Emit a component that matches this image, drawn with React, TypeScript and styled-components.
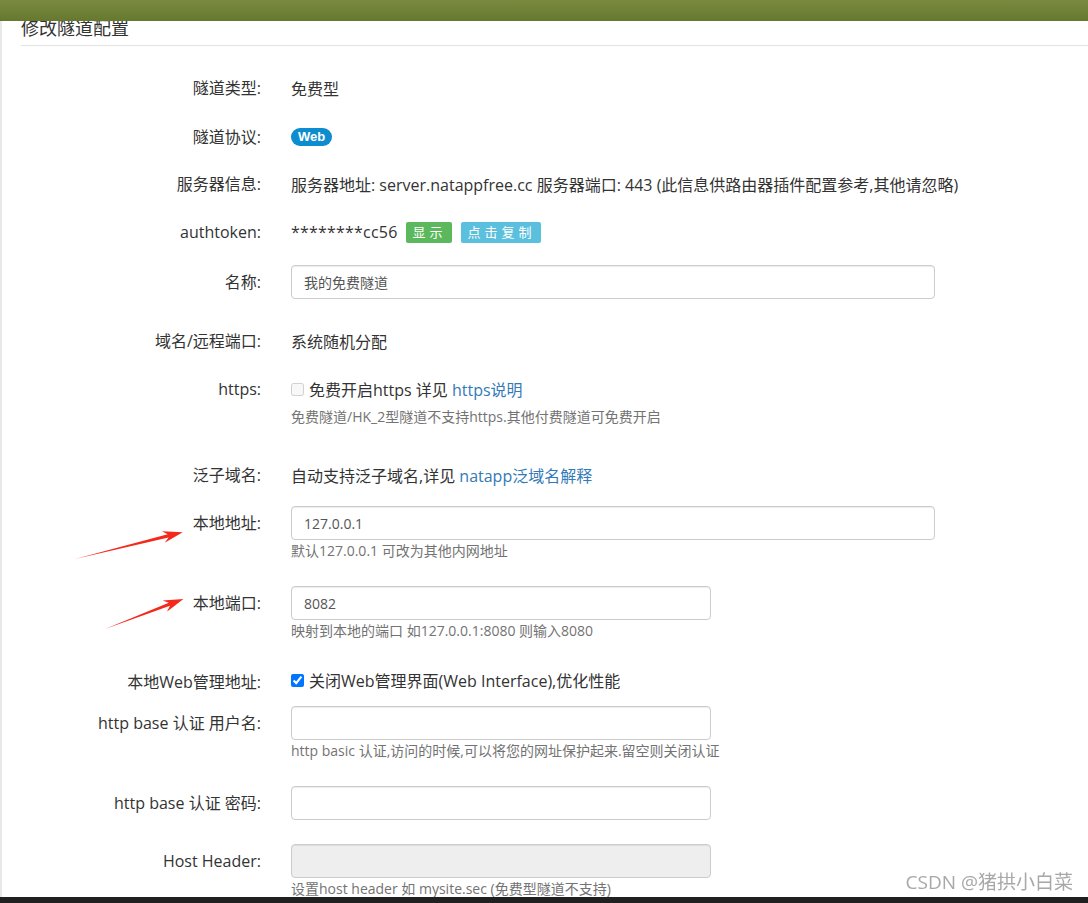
import React from "react";
import styled, { createGlobalStyle } from "styled-components";

const GlobalStyle = createGlobalStyle`
  html, body {
    margin: 0;
    padding: 0;
    background: #fff;
  }
  body {
    font-family: "Open Sans", "Noto Sans CJK SC", sans-serif;
    color: #333;
    font-size: 16px;
  }
`;

const FONT = `"Open Sans", "Noto Sans CJK SC", sans-serif`;

const App = () => {
  return (
    <>
      <GlobalStyle />
      <TopBar />
      <Panel>
        <Title>修改隧道配置</Title>
        <Form>
          <Arrows width="300" height="700" viewBox="0 0 300 700">
            <Arrow x={75} y={557 - 44} len={111} angle={-14} />
            <Arrow x={105} y={627 - 44} len={84} angle={-21} />
          </Arrows>

          <Row $mb={15}>
            <Label>隧道类型:</Label>
            <Static>免费型</Static>
          </Row>
          <Row $mb={13}>
            <Label>隧道协议:</Label>
            <Static>
              <Badge>Web</Badge>
            </Static>
          </Row>
          <Row $mb={14}>
            <Label>服务器信息:</Label>
            <Static>
              服务器地址: server.natappfree.cc 服务器端口: 443
              (此信息供路由器插件配置参考,其他请忽略)
            </Static>
          </Row>
          <Row $mb={16}>
            <Label>authtoken:</Label>
            <Static>
              <Token>********cc56</Token>
              <SmallBtn $color="#5cb85c">显示</SmallBtn>
              <SmallBtn $color="#5bc0de">点击复制</SmallBtn>
            </Static>
          </Row>
          <Row $mb={25}>
            <Label>名称:</Label>
            <div>
              <Input $w={644} defaultValue="我的免费隧道" />
            </div>
          </Row>
          <Row $mb={14}>
            <Label>域名/远程端口:</Label>
            <Static>系统随机分配</Static>
          </Row>
          <Row $mb={31}>
            <Label>https:</Label>
            <div>
              <Static>
                <Check type="checkbox" disabled />
                免费开启https 详见 <Link>https说明</Link>
              </Static>
              <Help>免费隧道/HK_2型隧道不支持https.其他付费隧道可免费开启</Help>
            </div>
          </Row>
          <Row $mb={14}>
            <Label>泛子域名:</Label>
            <Static>
              自动支持泛子域名,详见 <Link>natapp泛域名解释</Link>
            </Static>
          </Row>
          <Row $mb={25}>
            <Label>本地地址:</Label>
            <div>
              <Input $w={644} defaultValue="127.0.0.1" />
              <Help>默认127.0.0.1 可改为其他内网地址</Help>
            </div>
          </Row>
          <Row $mb={20}>
            <Label>本地端口:</Label>
            <div>
              <Input $w={420} defaultValue="8082" />
              <Help>映射到本地的端口 如127.0.0.1:8080 则输入8080</Help>
            </div>
          </Row>
          <Row $mb={7}>
            <Label $offset={4}>本地Web管理地址:</Label>
            <Static>
              <Check type="checkbox" defaultChecked />
              关闭Web管理界面(Web Interface),优化性能
            </Static>
          </Row>
          <Row $mb={25}>
            <Label>http base 认证 用户名:</Label>
            <div>
              <Input $w={420} />
              <Help>http basic 认证,访问的时候,可以将您的网址保护起来.留空则关闭认证</Help>
            </div>
          </Row>
          <Row $mb={24}>
            <Label>http base 认证 密码:</Label>
            <div>
              <Input $w={420} />
            </div>
          </Row>
          <Row $mb={20}>
            <Label>Host Header:</Label>
            <div>
              <Input $w={420} disabled />
              <Help>设置host header 如 mysite.sec (免费型隧道不支持)</Help>
            </div>
          </Row>
        </Form>
      </Panel>
      <Watermark>CSDN @猪拱小白菜</Watermark>
      <BottomBar />
    </>
  );
};

export default App;

interface ArrowProps {
  x: number;
  y: number;
  len: number;
  angle: number;
}

const Arrow = ({ x, y, len, angle }: ArrowProps) => {
  const L = len;
  const pts = `0,0 ${L - 15},-1.7 ${L - 20},-6 ${L},0 ${L - 20},6 ${L - 15},1.7`;
  return (
    <g transform={`translate(${x} ${y}) rotate(${angle})`}>
      <polygon points={pts} fill="#f5281c" />
    </g>
  );
};

const TopBar = styled.div`
  position: fixed;
  top: 0;
  left: 0;
  right: 0;
  height: 21px;
  background: linear-gradient(#7a8b40, #66772f);
  z-index: 5;
`;

const BottomBar = styled.div`
  position: fixed;
  left: 0;
  right: 0;
  bottom: 0;
  height: 6px;
  background: #202020;
  z-index: 5;
`;

const Panel = styled.div`
  border-left: 2px solid #e8e8e8;
  min-height: 903px;
  box-sizing: border-box;
  padding-left: 19px;
  padding-top: 15px;
`;

const Title = styled.div`
  font-family: ${FONT};
  font-size: 18px;
  line-height: 26px;
  color: #333;
  padding-bottom: 4px;
  border-bottom: 1px solid #e3e3e3;
`;

const Form = styled.div`
  position: relative;
  padding-top: 25px;
`;

const Arrows = styled.svg`
  position: absolute;
  left: -21px;
  top: 0;
  pointer-events: none;
  overflow: visible;
`;

const Row = styled.div<{ $mb: number }>`
  display: grid;
  grid-template-columns: 240px 1fr;
  column-gap: 30px;
  margin-bottom: ${({ $mb }) => $mb}px;
`;

const Label = styled.div<{ $offset?: number }>`
  text-align: right;
  font-size: 16px;
  line-height: 34px;
  color: #333;
  white-space: nowrap;
  padding-top: ${({ $offset }) => $offset || 0}px;
`;

const Static = styled.div`
  display: flex;
  align-items: center;
  min-height: 34px;
  font-size: 16px;
  color: #333;
  white-space: pre-wrap;
`;

const Badge = styled.span`
  display: inline-block;
  background: #0d8ccf;
  color: #fff;
  font-family: "Liberation Sans", Arial, sans-serif;
  font-weight: bold;
  font-size: 13px;
  line-height: 18px;
  padding: 0 7px;
  border-radius: 9px;
`;

const Token = styled.span`
  letter-spacing: 0.2px;
  margin-right: 8px;
`;

const SmallBtn = styled.span<{ $color: string }>`
  display: inline-block;
  background: ${({ $color }) => $color};
  color: #fff;
  font-size: 13px;
  line-height: 21px;
  padding: 0 5px 0 7px;
  letter-spacing: 4px;
  border-radius: 2px;
  margin-right: 9px;
`;

const Input = styled.input<{ $w: number }>`
  display: block;
  box-sizing: border-box;
  width: ${({ $w }) => $w}px;
  height: 34px;
  padding: 6px 12px;
  font-family: ${FONT};
  font-size: 14px;
  color: #555;
  background: #fff;
  border: 1px solid #ccc;
  border-radius: 4px;
  box-shadow: inset 0 1px 1px rgba(0, 0, 0, 0.075);
  outline: none;

  &:disabled {
    background: #eee;
  }
`;

const Help = styled.div`
  margin-top: 1px;
  font-size: 14px;
  line-height: 20px;
  color: #737373;
`;

const Check = styled.input`
  width: 13px;
  height: 13px;
  margin: 0 5px 0 0;
`;

const Link = styled.span`
  color: #337ab7;
`;

const Watermark = styled.div`
  position: fixed;
  right: 15px;
  bottom: 8px;
  font-family: ${FONT};
  font-size: 19px;
  color: #a8a8a8;
  text-shadow: 0 0 1px #fff;
  z-index: 6;
`;
